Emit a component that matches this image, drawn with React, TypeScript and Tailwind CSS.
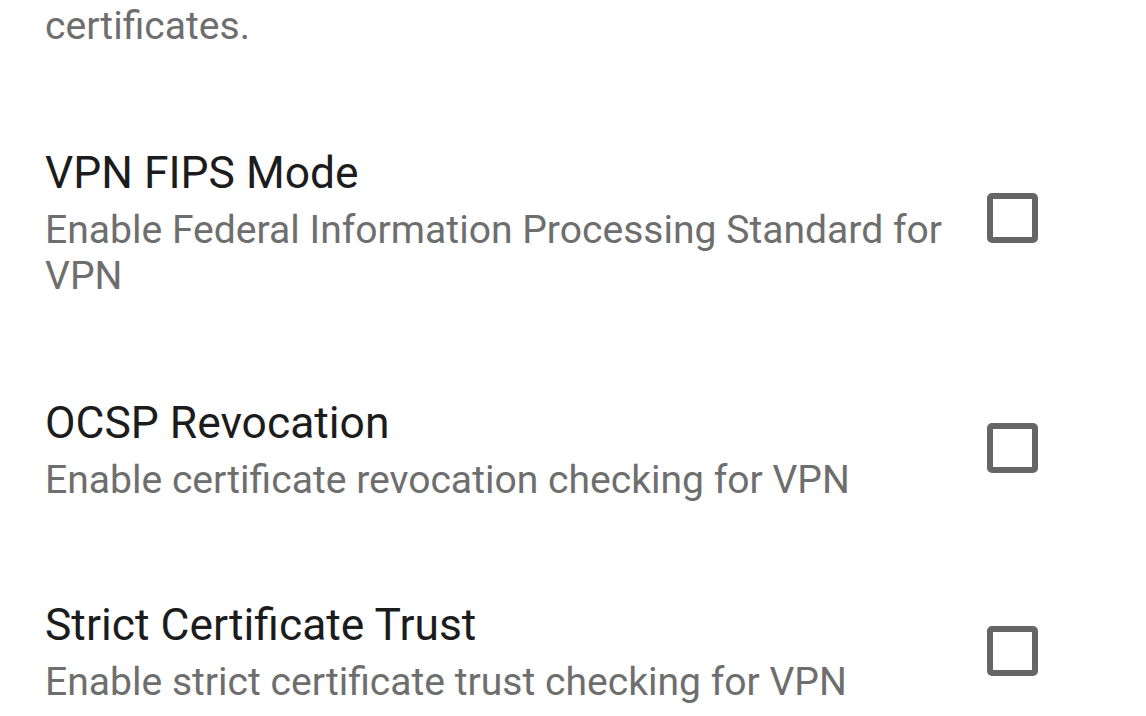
import React from "react";

function Checkbox({ shift }: { shift: string }) {
  return (
    <div className={`w-[51px] h-[50px] shrink-0 rounded-[5px] border-[6px] border-[#666666] bg-white ${shift}`} />
  );
}

function Row({
  title,
  lines,
  pb,
  shift,
}: {
  title: string;
  lines: string[];
  pb: string;
  shift: string;
}) {
  return (
    <div className={`flex items-center pt-[48px] ${pb} pl-[45px] pr-[108px]`}>
      <div className="flex-1 min-w-0">
        <div className="text-[44.4px] leading-[50px] text-[#1c1c1c] whitespace-nowrap">{title}</div>
        <div className="mt-[9px] text-[39.1px] leading-[46px] text-[#6e6e6e]">
          {lines.map((l, i) => (
            <div key={i} className="whitespace-nowrap">{l}</div>
          ))}
        </div>
      </div>
      <Checkbox shift={shift} />
    </div>
  );
}

export default function App() {
  return (
    <div
      className="w-[1146px] h-[716px] overflow-hidden bg-white"
      style={{ fontFamily: "Roboto, 'Noto Sans', sans-serif" }}
    >
      <div className="pt-[3px] pb-[51px] pl-[45px] text-[39.1px] leading-[46px] text-[#6e6e6e]">
        certificates.
      </div>
      <Row
        title="VPN FIPS Mode"
        lines={["Enable Federal Information Processing Standard for", "VPN"]}
        pb="pb-[51px]"
        shift="-translate-y-[6px]"
      />
      <Row
        title="OCSP Revocation"
        lines={["Enable certificate revocation checking for VPN"]}
        pb="pb-[49px]"
        shift="-translate-y-[3px]"
      />
      <Row
        title="Strict Certificate Trust"
        lines={["Enable strict certificate trust checking for VPN"]}
        pb="pb-[49px]"
        shift="-translate-y-[2px]"
      />
    </div>
  );
}
